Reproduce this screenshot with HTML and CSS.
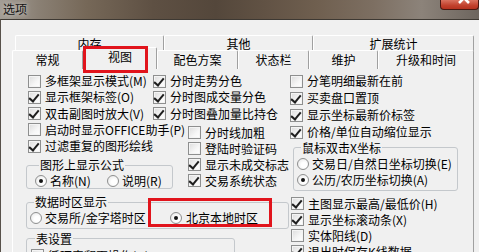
FILE: index.html
```html
<!DOCTYPE html>
<html lang="zh-CN">
<head>
    <meta charset="UTF-8">
    <title>选项</title>
    <link rel="stylesheet" href="styles.css">
</head>
<body>
    <div class="titlebar">
        <span class="title">选项</span>
        <span class="close">
            <svg width="39" height="10" viewBox="0 0 39 10">
                <path d="M19 -6 L29 4 M29 -6 L19 4" stroke="#fff" stroke-width="2.6" fill="none"/>
            </svg>
        </span>
    </div>

    <div class="window">
        <div class="tabs">
            <div class="tab-row row-back">
                <div class="tab" style="width: 149px">内存</div>
                <div class="tab" style="width: 149px">其他</div>
                <div class="tab" style="width: 161px">扩展统计</div>
            </div>
            <div class="tab-row row-front">
                <div class="tab" style="width: 71px">常规</div>
                <div class="tab active" style="width: 74px">视图</div>
                <div class="tab" style="width: 81px">配色方案</div>
                <div class="tab" style="width: 71px">状态栏</div>
                <div class="tab" style="width: 69px">维护</div>
                <div class="tab" style="width: 96px">升级和时间</div>
            </div>
        </div>

        <div class="panel">
            <div class="left">
                <div class="top">
                    <div class="col-a">
                        <div class="check"><span class="box"></span>多框架显示模式(M)</div>
                        <div class="check"><span class="box on"></span>显示框架标签(O)</div>
                        <div class="check"><span class="box on"></span>双击副图时放大(V)</div>
                        <div class="check"><span class="box"></span>启动时显示OFFICE助手(P)</div>
                        <div class="check"><span class="box on"></span>过滤重复的图形绘线</div>

                        <fieldset class="group g-formula">
                            <legend>图形上显示公式</legend>
                            <div class="opts">
                                <div class="opt"><span class="radio on"></span>名称(N)</div>
                                <div class="opt"><span class="radio"></span>说明(R)</div>
                            </div>
                        </fieldset>
                    </div>
                    <div class="col-b">
                        <div class="check"><span class="box on"></span>分时走势分色</div>
                        <div class="check"><span class="box on"></span>分时图成交量分色</div>
                        <div class="check"><span class="box on"></span>分时图叠加量比持仓</div>
                        <div class="sub">
                            <div class="check"><span class="box"></span>分时线加粗</div>
                            <div class="check"><span class="box"></span>登陆时验证码</div>
                            <div class="check"><span class="box on"></span>显示未成交标志</div>
                            <div class="check"><span class="box on"></span>交易系统状态</div>
                        </div>
                    </div>
                </div>

                <fieldset class="group g-zone">
                    <legend>数据时区显示</legend>
                    <div class="opts">
                        <div class="opt"><span class="radio"></span>交易所/金字塔时区</div>
                        <div class="opt"><span class="radio on"></span>北京本地时区</div>
                    </div>
                </fieldset>

                <fieldset class="group g-table">
                    <legend>表设置</legend>
                    <div class="check"><span class="box"></span>循环表翻页操作(Q)</div>
                </fieldset>
            </div>

            <div class="right">
                <div class="check"><span class="box"></span>分笔明细最新在前</div>
                <div class="check"><span class="box on"></span>买卖盘口置顶</div>
                <div class="check"><span class="box on"></span>显示坐标最新价标签</div>
                <div class="check"><span class="box on"></span>价格/单位自动缩位显示</div>

                <fieldset class="group g-mouse">
                    <legend>鼠标双击X坐标</legend>
                    <div class="opt"><span class="radio"></span>交易日/自然日坐标切换(E)</div>
                    <div class="opt"><span class="radio on"></span>公历/农历坐标切换(A)</div>
                </fieldset>

                <div class="lower">
                    <div class="check"><span class="box on"></span>主图显示最高/最低价(H)</div>
                    <div class="check"><span class="box on"></span>显示坐标滚动条(X)</div>
                    <div class="check"><span class="box"></span>实体阳线(D)</div>
                    <div class="check"><span class="box on"></span>退出时保存K线数据</div>
                </div>
            </div>
        </div>
    </div>

    <div class="mark mark-tab"></div>
    <div class="mark mark-zone"></div>
</body>
</html>
```

FILE: styles.css
```css
* {
    box-sizing: border-box;
}

body {
    margin: 0;
    width: 479px;
    height: 252px;
    overflow: hidden;
    position: relative;
    background: #f0f0f0;
    font-family: "Noto Sans CJK SC", "Noto Sans", sans-serif;
    font-size: 12px;
    color: #000;
}

/* title bar */
.titlebar {
    height: 19px;
    display: flex;
    align-items: flex-start;
    background: linear-gradient(90deg, #a39d95 0%, #8a8074 8%, #766858 18%, #5e5043 32%, #54473b 45%, #615244 55%, #6f5f4f 66%, #7d6f62 78%, #8c837a 88%, #6d655e 100%);
}

.title {
    padding-left: 3px;
    line-height: 18px;
    color: #141414;
    text-shadow: 0 0 5px rgba(255, 255, 255, 0.7);
}

.close {
    margin-left: auto;
    width: 39px;
    height: 10px;
    border: 1px solid #4a1710;
    border-top: none;
    border-radius: 0 0 4px 4px;
    background: linear-gradient(180deg, #d9725f, #c2412d 60%, #b5321f);
    overflow: hidden;
}

.close svg {
    display: block;
    margin: -1px 0 0 -1px;
}

/* window body */
.window {
    height: 233px;
    border-top: 1px solid #3e3933;
    border-left: 1px solid #57514a;
    overflow: hidden;
}

.tabs {
    padding-top: 15px;
}

.tab-row {
    display: flex;
}

.row-back {
    margin-left: 14px;
    height: 16px;
}

.row-front {
    margin-left: 11px;
    margin-top: -1px;
    height: 19px;
    align-items: flex-end;
}

.tab {
    height: 100%;
    text-align: center;
    background: #f0f0f0;
    border-top: 1px solid #fff;
    border-left: 1px solid #fff;
    border-right: 1px solid #a0a0a0;
    border-radius: 2px 2px 0 0;
    white-space: nowrap;
}

.row-back .tab {
    line-height: 15px;
}

.row-front .tab {
    line-height: 17px;
}

.row-front .tab.active {
    position: relative;
    z-index: 1;
    height: 22px;
    line-height: 18px;
}

/* tab page */
.panel {
    margin-left: 11px;
    margin-top: -1px;
    width: 462px;
    height: 200px;
    border-top: 1px solid #fff;
    border-left: 1px solid #fff;
    border-right: 1px solid #a0a0a0;
    display: grid;
    grid-template-columns: 276px 1fr;
}

.left {
    padding: 4px 0 0 13px;
}

.top {
    display: grid;
    grid-template-columns: 127px 1fr;
}

.right {
    padding-top: 3.5px;
}

.check {
    display: flex;
    align-items: center;
    gap: 4px;
    height: 16.25px;
    line-height: 14px;
    white-space: nowrap;
}

.col-a .check {
    padding-left: 2px;
}

.sub {
    margin: 3px 0 0 35px;
}

.sub .check {
    height: 16px;
}

.right > .check {
    height: 17px;
    padding-left: 1px;
}

.lower {
    margin-top: 5px;
}

.lower .check {
    height: 16px;
    padding-left: 2px;
}

.box {
    flex: none;
    width: 13px;
    height: 13px;
    border: 1px solid #8e8f8f;
    background: linear-gradient(135deg, #dcdcdc, #f6f6f6 60%, #fff);
    box-shadow: inset 0 0 0 1px #f4f4f4;
    position: relative;
}

.box.on::after {
    content: "";
    position: absolute;
    left: 2px;
    top: 0;
    width: 4px;
    height: 8px;
    border-right: 2px solid #1e1e1e;
    border-bottom: 2px solid #1e1e1e;
    transform: rotate(40deg);
}

.radio {
    flex: none;
    width: 12px;
    height: 12px;
    border: 1px solid #8e8f8f;
    border-radius: 50%;
    background: radial-gradient(circle at 60% 60%, #fff 30%, #e2e2e2);
    position: relative;
}

.radio.on::after {
    content: "";
    position: absolute;
    left: 3px;
    top: 3px;
    width: 4px;
    height: 4px;
    border-radius: 50%;
    background: #141414;
}

/* group boxes */
.group {
    margin: 0;
    padding: 0;
    border: 1px solid #c4c8cc;
    border-radius: 3px;
    min-width: 0;
}

.group legend {
    margin-left: 4px;
    padding: 0 1px;
    line-height: 14px;
}

.opts {
    display: grid;
}

.opt {
    display: flex;
    align-items: center;
    gap: 3px;
    height: 14px;
    line-height: 14px;
    white-space: nowrap;
}

.g-formula {
    margin-top: 4px;
    width: 147px;
    padding: 2px 0 0 8px;
}

.g-formula .opts {
    grid-template-columns: 72px 1fr;
}

.g-zone {
    margin-top: 6px;
    width: 263px;
    padding: 1.5px 0 3px 3px;
}

.g-zone .opts {
    grid-template-columns: 140px 1fr;
}

.g-zone .opt + .opt {
    gap: 4px;
}

.g-table {
    margin-top: 3px;
    width: 209px;
    padding: 2px 0 0 4px;
}

.g-mouse {
    margin-left: 4px;
    width: 165px;
    padding: 1px 0 2px 3px;
}

.g-mouse .opt {
    height: 16px;
}

/* red annotation boxes drawn over the dialog */
.mark {
    position: absolute;
    border: 3px solid #e1141c;
    z-index: 5;
}

.mark-tab {
    left: 83px;
    top: 46px;
    width: 65px;
    height: 27px;
}

.mark-zone {
    left: 148px;
    top: 198px;
    width: 124px;
    height: 29px;
}
```
